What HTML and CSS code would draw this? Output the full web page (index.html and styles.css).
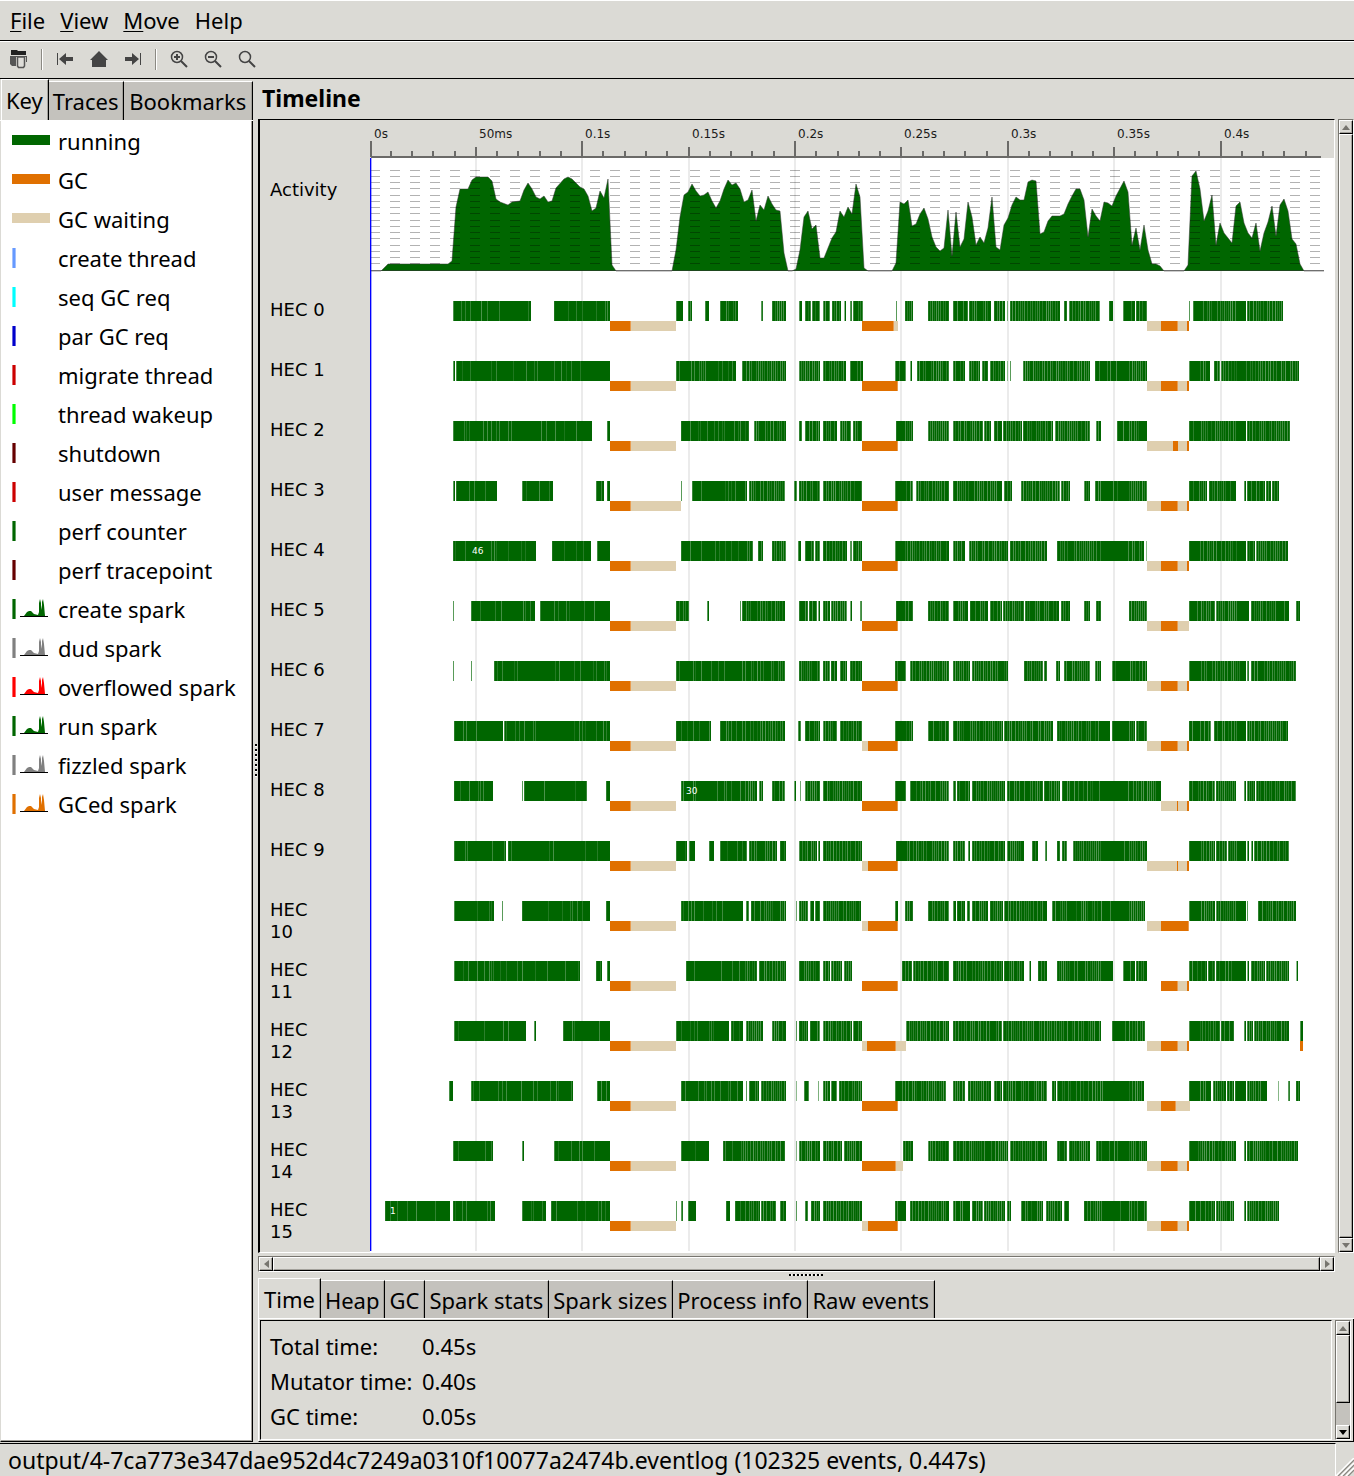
FILE: index.html
```html
<!DOCTYPE html>
<html lang="en">
<head>
<meta charset="utf-8">
<title>ThreadScope</title>
<link rel="stylesheet" href="styles.css">
</head>
<body>
<nav class="menubar">
  <button class="menu"><u>F</u>ile</button>
  <button class="menu"><u>V</u>iew</button>
  <button class="menu"><u>M</u>ove</button>
  <button class="menu">Help</button>
</nav>
<div class="toolbar">
  <button class="tool" aria-label="Open"><svg width="20" height="20" viewBox="0 0 20 20"><path d="M2 1h6l1 1h8v4H2z" fill="#222"/><path d="M1 7h17v6h-1V8H7v9H3l-2-2z" fill="#555"/><path d="M8.500 8h7v9l-1 1.500h-5l-1-1.500z" fill="#deddd9" stroke="#555" stroke-width="1.500"/></svg></button>
  <span class="sep"></span>
  <button class="tool" aria-label="Go to start"><svg width="18" height="18" viewBox="0 0 18 18"><path d="M1 3h1v12H1zM3 9l7-6v4h7v4h-7v4z" fill="#444"/></svg></button>
  <button class="tool" aria-label="Home"><svg width="18" height="18" viewBox="0 0 18 18"><path d="M9 1l9 9h-2v7H2v-7H0z" fill="#444"/></svg></button>
  <button class="tool" aria-label="Go to end"><svg width="18" height="18" viewBox="0 0 18 18"><path d="M16 3h1v12h-1zM15 9L8 3v4H1v4h7v4z" fill="#444"/></svg></button>
  <span class="sep"></span>
  <button class="tool" aria-label="Zoom in"><svg width="18" height="18" viewBox="0 0 18 18" fill="none" stroke="#444"><circle cx="7" cy="7" r="5.500" stroke-width="1.500"/><path d="M4 7h6M7 4v6M11 11l6 6" stroke-width="2"/></svg></button>
  <button class="tool" aria-label="Zoom out"><svg width="18" height="18" viewBox="0 0 18 18" fill="none" stroke="#444"><circle cx="7" cy="7" r="5.500" stroke-width="1.500"/><path d="M4 7h6M11 11l6 6" stroke-width="2"/></svg></button>
  <button class="tool" aria-label="Fit to window"><svg width="18" height="18" viewBox="0 0 18 18" fill="none" stroke="#444"><circle cx="7" cy="7" r="5.500" stroke-width="1.500"/><path d="M11 11l6 6" stroke-width="2"/></svg></button>
</div>
<main class="main">
  <aside class="side">
    <div class="tabs">
      <button class="tab active">Key</button><button class="tab">Traces</button><button class="tab">Bookmarks</button>
    </div>
    <ul class="legend" id="legend"></ul>
  </aside>
  <div class="grip-v"></div>
  <section class="right">
    <h1 class="title">Timeline</h1>
    <div class="timeline">
      <div class="frame">
        <div class="labels" id="labels"></div>
        <div class="canvas"><svg id="chart" width="963" height="1131" viewBox="370 120 963 1131"></svg></div>
      </div>
      <div class="vscroll">
        <button class="arrow" aria-label="Scroll up"><svg width="8" height="5"><path d="M4 0l4 5H0z" fill="#77756f"/></svg></button>
        <div class="thumb grow"></div>
        <button class="arrow" aria-label="Scroll down"><svg width="8" height="5"><path d="M0 0h8L4 5z" fill="#77756f"/></svg></button>
      </div>
    </div>
    <div class="hscroll">
      <button class="arrow" aria-label="Scroll left"><svg width="5" height="8"><path d="M5 0v8L0 4z" fill="#77756f"/></svg></button>
      <div class="thumb grow"></div>
      <button class="arrow" aria-label="Scroll right"><svg width="5" height="8"><path d="M0 0l5 4-5 4z" fill="#77756f"/></svg></button>
    </div>
    <div class="grip-h"></div>
    <div class="tabs lower">
      <button class="tab active">Time</button><button class="tab">Heap</button><button class="tab">GC</button><button class="tab">Spark stats</button><button class="tab">Spark sizes</button><button class="tab">Process info</button><button class="tab">Raw events</button>
    </div>
    <div class="page">
      <div class="stats">
        <table>
          <tr><th scope="row">Total time:</th><td>0.45s</td></tr>
          <tr><th scope="row">Mutator time:</th><td>0.40s</td></tr>
          <tr><th scope="row">GC time:</th><td>0.05s</td></tr>
        </table>
      </div>
      <div class="vscroll">
        <button class="arrow" aria-label="Scroll up"><svg width="8" height="5"><path d="M4 0l4 5H0z" fill="#77756f"/></svg></button>
        <div class="thumb short"></div>
        <div class="grow"></div>
        <button class="arrow" aria-label="Scroll down"><svg width="8" height="5"><path d="M0 0h8L4 5z" fill="#000"/></svg></button>
      </div>
    </div>
  </section>
</main>
<footer class="status">
  <span class="status-text">output/4-7ca773e347dae952d4c7249a0310f10077a2474b.eventlog (102325 events, 0.447s)</span>
  <svg class="corner" width="18" height="18" viewBox="0 0 18 18" stroke-width="1.500"><path d="M2 18L18 2M7 18L18 7M12 18l6-6" stroke="#8b8983"/><path d="M0 18L18 0M5 18L18 5M10 18l8-8" stroke="#fff"/></svg>
</footer>
<script src="timeline.js"></script>
</body>
</html>
```
FILE: styles.css
```css
* { box-sizing: border-box; }
body {
  margin: 0;
  min-height: 100vh;
  display: flex;
  flex-direction: column;
  background: #dbdad5;
  color: #000;
  font: 22px/30px "Noto Sans", sans-serif;
}
button { font: inherit; color: inherit; margin: 0; padding: 0; border: 0; background: none; }

.menubar {
  display: flex;
  gap: 15px;
  height: 41px;
  padding: 4px 10px 5px;
  border-top: 1px solid #fff;
  border-bottom: 1px solid #000;
}
.menu u { text-decoration-thickness: 1px; text-underline-offset: 2px; }
.toolbar {
  display: flex;
  align-items: center;
  height: 38px;
  padding: 0 0 2px 2px;
  border-top: 1px solid #fff;
  border-bottom: 1px solid #000;
}
.tool { width: 34px; height: 34px; display: flex; align-items: center; justify-content: center; }
.sep { width: 2px; height: 21px; margin: 0 5px; border-left: 1px solid #8b8983; border-right: 1px solid #fff; }

.main { flex: 1; display: flex; }
.side { width: 253px; flex: none; display: flex; flex-direction: column; }
.tabs { display: flex; align-items: flex-end; height: 42px; border-bottom: 1px solid #fff; padding-left: 1px; }
.tab {
  height: 39px;
  padding: 0 5px 0 4px;
  background: #c4c2bd;
  border-top: 1px solid #fff;
  border-right: 1px solid #000;
  box-shadow: inset -1px 0 #a3a19b;
  white-space: nowrap;
}
.side .tab:last-child { flex: 1; }
.tab.active { height: 41px; background: #dbdad5; border-left: 1px solid #fff; }
.legend {
  flex: 1;
  margin: 0;
  padding: 0 0 0 10px;
  list-style: none;
  background: #fff;
  border-left: 1px solid #dbdad5;
  border-right: 1px solid #000;
  border-bottom: 1px solid #000;
  box-shadow: inset -1px -1px #a3a19b;
}
.legend li { display: flex; align-items: center; gap: 8px; height: 39px; white-space: nowrap; }
.legend svg { margin-left: 1px; flex: none; }

.grip-v {
  width: 5px;
  flex: none;
  background: repeating-linear-gradient(#000 0 2px, #fff 2px 3px, transparent 3px 5px) 2px 50% / 2px 34px no-repeat;
}
.grip-h {
  height: 6px;
  background: repeating-linear-gradient(90deg, #000 0 2px, #fff 2px 3px, transparent 3px 4px) 50% 2px / 34px 2px no-repeat;
}
.right { flex: 1; min-width: 0; display: flex; flex-direction: column; }
.title { margin: 0; height: 40px; padding: 4px; font-size: 23px; line-height: 30px; }
.timeline { flex: 1; display: flex; gap: 3px; }
.frame {
  flex: 1;
  min-width: 0;
  display: flex;
  border: 1px solid #fff;
  border-top-color: #000;
  border-left: 2px solid #000;
}
.labels { width: 110px; flex: none; padding: 59px 10px 0; font: 18px/22px "DejaVu Sans", sans-serif; }
.labels div { height: 60px; width: 70px; }
.labels div:first-child { height: 120px; }
.labels div:last-child { height: 50px; }
.canvas { flex: 1; min-width: 0; overflow: hidden; background: linear-gradient(#dbdad5 38px, #fff 38px); }
.canvas svg { display: block; }
.ruler-text { font: 12px "DejaVu Sans", sans-serif; fill: #1a1a1a; }
.thread-text { font: 9px "DejaVu Sans", sans-serif; fill: #fff; }

.vscroll, .hscroll {
  display: flex;
  background: #c4c2bd;
  border: 1px solid #fff;
  border-top-color: #77756f;
  border-left-color: #77756f;
}
.vscroll { width: 16px; flex: none; flex-direction: column; }
.hscroll { height: 16px; margin: 3px 19px 0 0; }
.arrow { width: 14px; height: 14px; flex: none; display: flex; align-items: center; justify-content: center; }
.arrow, .thumb {
  background: #dbdad5;
  border: 1px solid #fff;
  border-right-color: #000;
  border-bottom-color: #000;
  box-shadow: inset -1px -1px #a3a19b;
}
.grow { flex: 1; }
.short { height: 68px; }

.lower { height: 41px; padding-left: 0; }
.lower .tab.active { height: 40px; padding-left: 5px; }
.lower .tab { height: 38px; }
.page {
  display: flex;
  gap: 3px;
  height: 123px;
  padding: 1px 2px 1px 1px;
  border-left: 1px solid #fff;
  border-right: 1px solid #000;
  border-bottom: 1px solid #000;
}
.stats { flex: 1; border: 1px solid #fff; border-top-color: #000; border-left-color: #000; padding: 7px 9px; }
.stats table { border-collapse: collapse; }
.stats th, .stats td { height: 35px; padding: 0; font-weight: normal; text-align: left; }
.stats th { width: 152px; }

.status { display: flex; height: 34px; align-items: flex-end; }
.status-text {
  flex: 1;
  height: 33px;
  padding-left: 8px;
  border-top: 1px solid #000;
  border-right: 1px solid #fff;
  font-size: 23px;
  line-height: 32px;
  white-space: nowrap;
}
.corner { flex: none; }
```
FILE: timeline.js
```js
const GREEN = '#006600', ORANGE = '#e07000', TAN = '#dfcfaf';

/* Key panel */
const bar = c => `<rect y="4" width="38" height="10" fill="${c}"/>`;
const tick = c => `<path d="M0 0h4v20H0z" fill="${c}" opacity=".6"/><path d="M1 0h2v20H1z" fill="${c}"/>`;
const spark = c => tick(c) + `<path d="M12 17l3-4 2-1h2l3 3 4 1 1-3V4l1-4 1 4v7l1-5V3l1-3 1 6 1 11z" fill="${c}"/><path d="M8 17.500h28" stroke="#000"/>`;
const key = [
  ['running', bar(GREEN)], ['GC', bar(ORANGE)], ['GC waiting', bar(TAN)],
  ['create thread', tick('#6699ff')], ['seq GC req', tick('#00ffff')], ['par GC req', tick('#0000cc')],
  ['migrate thread', tick('#cc0000')], ['thread wakeup', tick('#00ff00')], ['shutdown', tick('#660000')],
  ['user message', tick('#cc0000')], ['perf counter', tick('#006600')], ['perf tracepoint', tick('#660000')],
  ['create spark', spark('#006600')], ['dud spark', spark('#808080')], ['overflowed spark', spark('#ff0000')],
  ['run spark', spark('#006600')], ['fizzled spark', spark('#808080')], ['GCed spark', spark('#e07000')]
];
document.getElementById('legend').innerHTML =
  key.map(([t, g]) => `<li><svg width="38" height="20">${g}</svg>${t}</li>`).join('');

/* Running intervals of each capability, start-end */
const runs = [
  '453-531 554-610 676-683 688-692 705-709 720-738 761-763 772-786 799-802 805-811 812-820 823-830 832-841 844-846 850-852 853-863 896-897 905-913 928-949 953-968 969-991 994-1005 1007-1008 1010-1060 1064-1067 1069-1100 1109-1113 1123-1135 1136-1147 1189-1190 1193-1246 1247-1283',
  '453-455 456-610 676-736 742-786 799-820 823-846 850-863 895-906 910-912 917-949 953-965 969-980 982-988 990-1005 1007-1008 1010-1011 1023-1090 1095-1147 1189-1210 1214-1220 1221-1299',
  '453-592 607-610 681-749 754-786 799-802 805-820 823-837 840-851 853-862 896-913 928-949 953-983 984-991 994-1002 1003-1022 1023-1053 1055-1090 1096-1101 1117-1147 1189-1246 1247-1290',
  '453-455 456-497 522-553 596-604 607-610 681-682 692-747 749-785 794-797 799-820 823-862 895-913 916-949 953-1002 1004-1012 1021-1060 1061-1070 1084-1090 1095-1147 1189-1207 1209-1236 1244-1246 1247-1265 1266-1271 1272-1279',
  '453-536 552-591 597-610 681-753 758-763 772-786 798-801 805-814 815-820 823-847 850-852 853-862 895-949 953-965 969-1008 1010-1047 1057-1144 1146-1147 1189-1246 1247-1255 1256-1288',
  '453-454 471-535 540-610 676-689 707-709 740-741 742-785 799-808 809-817 818-820 823-830 831-847 850-852 860-862 896-913 928-949 953-968 970-988 990-1002 1003-1024 1025-1059 1061-1070 1084-1090 1096-1101 1129-1147 1189-1215 1216-1249 1251-1289 1296-1300',
  '453-454 471-472 494-610 676-785 799-820 823-830 831-837 840-847 850-862 895-906 910-949 953-970 972-1008 1024-1043 1044-1047 1056-1060 1064-1090 1095-1101 1112-1147 1189-1246 1247-1249 1251-1296',
  '454-503 504-610 676-711 720-785 798-801 805-820 823-837 840-862 895-913 928-949 953-1003 1004-1053 1057-1110 1112-1135 1136-1147 1189-1211 1214-1246 1247-1288',
  '454-493 522-523 524-587 606-610 681-757 759-763 772-785 794-796 800-801 805-820 823-862 895-906 910-949 953-956 957-970 972-1005 1007-1043 1044-1060 1062-1161 1189-1215 1216-1236 1244-1246 1247-1255 1256-1296',
  '454-506 508-610 676-687 689-695 709-714 720-747 749-777 780-786 799-817 818-820 823-862 896-949 953-965 968-970 972-1005 1007-1024 1032-1038 1045-1047 1057-1060 1062-1067 1073-1147 1189-1215 1216-1227 1228-1246 1247-1249 1251-1253 1254-1289',
  '454-494 502-503 522-590 606-610 681-743 746-749 751-786 796-797 799-808 810-814 815-820 823-861 895-898 905-913 928-949 953-956 957-965 967-970 972-988 990-1003 1004-1047 1052-1145 1189-1215 1216-1246 1247-1248 1258-1296',
  '454-580 596-602 607-610 686-757 759-786 799-820 823-830 831-842 844-852 902-912 913-949 953-1003 1004-1024 1029-1031 1038-1047 1057-1113 1123-1135 1136-1147 1189-1207 1208-1215 1216-1246 1247-1249 1251-1265 1266-1289 1296-1298',
  '454-526 534-536 563-610 676-729 731-743 746-763 772-786 796-797 799-808 810-820 823-852 853-862 906-949 953-1002 1003-1101 1112-1145 1189-1220 1221-1234 1244-1246 1247-1253 1254-1289 1300-1303',
  '449-453 471-573 597-610 681-743 746-747 749-759 761-786 796-797 804-809 818-819 823-830 831-837 839-862 895-946 953-965 968-991 994-1002 1003-1047 1052-1056 1057-1144 1189-1211 1213-1226 1227-1234 1235-1246 1247-1267 1278-1279 1288-1290 1296-1300',
  '453-493 522-524 554-610 681-709 723-785 796-797 799-820 823-842 844-862 903-913 928-949 953-1008 1010-1047 1057-1067 1069-1090 1096-1147 1189-1236 1244-1246 1247-1298',
  '385-450 453-495 522-546 551-610 676-677 681-683 688-696 726-730 735-760 761-776 780-786 796-797 805-808 811-820 823-862 895-906 910-949 953-970 972-983 984-1005 1007-1011 1021-1043 1046-1062 1064-1069 1084-1147 1189-1215 1216-1234 1244-1246 1247-1279'
];
/* Garbage collection, o = collecting, t = waiting */
const last = 't1147-1161 o1161-1178 t1178-1187 o1187-1189';
const gcs = [
  'o862-894 t894-898 ' + last,
  'o862-898 ' + last,
  'o862-898 t1147-1173 o1173-1178 t1178-1187 o1187-1189',
  'o862-898 ' + last,
  'o862-898 ' + last,
  'o862-898 t1147-1161 o1161-1178 t1178-1189',
  'o862-898 ' + last,
  't862-868 o868-898 ' + last,
  'o862-898 t1161-1177 o1177-1178 t1178-1187 o1187-1189',
  't862-868 o868-898 t1147-1177 o1177-1178 t1178-1187 o1187-1189',
  't862-868 o868-898 t1147-1161 o1161-1189',
  'o862-898 o1161-1178 t1178-1187 o1187-1189',
  't862-867 o867-896 t896-906 ' + last + ' o1300-1303',
  'o862-898 t1147-1161 o1161-1176 t1176-1190',
  'o862-896 t896-903 ' + last,
  't862-868 o868-898 ' + last
];
const activity = '371,271 381,271 388,264 448,264 452,261 456,207 460,189 468,189 472,180 476,177 488,177 492,181 496,199 500,202 508,205 512,202 520,201 524,190 528,183 532,189 536,197 540,199 544,196 548,202 552,201 556,188 564,179 568,177 572,179 580,187 584,189 588,196 592,211 596,208 600,191 604,198 608,179 612,265 616,271 672,271 676,250 680,217 684,195 688,192 692,184 696,191 700,196 704,195 708,192 712,201 716,208 720,201 724,189 728,180 732,185 736,183 740,189 744,202 748,200 752,190 756,221 760,205 764,210 768,196 772,204 776,210 780,211 784,253 788,271 792,271 796,269 800,250 804,217 808,211 812,229 816,225 820,258 824,258 832,238 836,232 840,211 844,217 848,207 852,214 856,184 860,197 864,268 868,271 892,271 896,263 900,202 904,204 908,200 912,226 916,224 920,214 924,208 928,219 932,237 936,247 940,251 944,248 948,210 952,256 956,212 960,247 964,239 968,202 972,217 976,245 980,237 984,243 988,228 992,197 996,247 1000,250 1004,225 1008,218 1012,205 1016,197 1020,200 1024,200 1028,182 1032,180 1036,181 1040,234 1044,232 1048,221 1052,216 1060,216 1064,214 1068,204 1072,196 1076,189 1080,189 1084,200 1088,237 1092,209 1096,216 1100,221 1104,202 1108,203 1112,206 1116,196 1124,181 1128,192 1132,245 1136,228 1140,250 1144,225 1148,250 1152,264 1156,264 1160,266 1164,271 1184,271 1188,265 1192,176 1196,171 1200,189 1204,221 1208,211 1212,195 1216,245 1220,223 1224,233 1232,243 1236,206 1240,202 1244,223 1248,233 1252,238 1256,223 1260,251 1264,233 1268,222 1272,206 1276,236 1280,205 1284,199 1288,211 1292,239 1296,244 1300,264 1304,271 1324,271';

const rect = (a, b, y, h, c, o = 1) => `<rect x="${a}" y="${y}" width="${b - a}" height="${h}" fill="${c}" opacity="${o}"/>`;
let out = '';

/* Grid and ruler */
const at = k => Math.max(371, Math.round(369.4 + k * 21.28));
for (let k = 5; k < 45; k += 5) out += rect(at(k) - 1, at(k) + 1, 158, 1093, '#ebebeb');
out += rect(371, 1321, 156, 2, '#6b6a68');
for (let k = 0; k < 45; k++) {
  const top = k % 10 === 0 ? 141 : k % 5 === 0 ? 147 : 151;
  out += rect(at(k) - 1, at(k) + 1, top, 157 - top, '#6b6a68');
}
['0s', '50ms', '0.1s', '0.15s', '0.2s', '0.25s', '0.3s', '0.35s', '0.4s'].forEach((t, i) => {
  out += `<text class="ruler-text" x="${at(i * 5) + 3}" y="138">${t}</text>`;
});

/* Activity graph */
out += `<polygon points="${activity}" fill="${GREEN}"/><polyline points="${activity}" fill="none" stroke="#333" opacity=".5"/>`;
out += '<path d="M371 270.500H1324" stroke="#333" opacity=".6"/>';
for (const y of [170, 176, 182, 188, 195, 201, 207, 213, 220, 226, 232, 238, 245, 251, 257, 263])
  out += `<path d="M370 ${y}.5H1321" stroke="#000" stroke-opacity=".3" stroke-dasharray="10"/>`;

/* Thread switches show as faint lines, dense once the sparks become short */
const noise = (a, b) => { const v = Math.sin(a * 12.9898 + b * 78.233) * 43758.5453; return v - Math.floor(v); };
const solid = x => (x > 1189 && x < 1200) || (x > 1236 && x < 1246) || (x > 896 && x < 905) || (x > 1101 && x < 1129) || x < 450;
const density = x => x < 676 ? .12 : x < 745 ? .16 : solid(x) ? .06 : .6;
runs.forEach((line, row) => {
  const y = 301 + row * 60;
  for (const s of line.split(' ')) {
    const [a, b] = s.split('-').map(Number);
    out += rect(a, b, y, 20, GREEN);
    let prev = false;
    for (let x = a; x < b; x++) {
      const hit = !prev && (x === a && b - a > 2 || noise(x, row + 1) < density(x));
      if (hit) out += rect(x, x + 1, y, 20, '#fff', x > 745 ? .1 + .25 * noise(row, x) : .1 + .2 * noise(row, x));
      prev = hit;
    }
    if (b - a < 3) out += rect(a, a + 1, y, 20, '#fff', .35);
  }
  const wait = row === 3 ? 681 : 676;
  for (const s of `o610-631 t631-${wait} ${gcs[row]}`.split(' ')) {
    const [a, b] = s.slice(1).split('-').map(Number);
    out += rect(a, b, y + 20, 10, s[0] === 'o' ? ORANGE : TAN);
    if (s[0] === 'o' && b - a > 8) out += rect(b - 1, b, y + 20, 10, '#fff', .3);
  }
});
out += '<text class="thread-text" x="472" y="554">46</text><text class="thread-text" x="686" y="794">30</text><text class="thread-text" x="390" y="1214">1</text>';
out += rect(370, 371, 158, 1093, '#0000ff') + rect(371, 372, 158, 1093, '#0000ff', .35);
document.getElementById('chart').innerHTML = out;

document.getElementById('labels').innerHTML = '<div>Activity</div>' +
  runs.map((_, i) => `<div>HEC ${i > 9 ? '<br>' : ''}${i}</div>`).join('');
```
